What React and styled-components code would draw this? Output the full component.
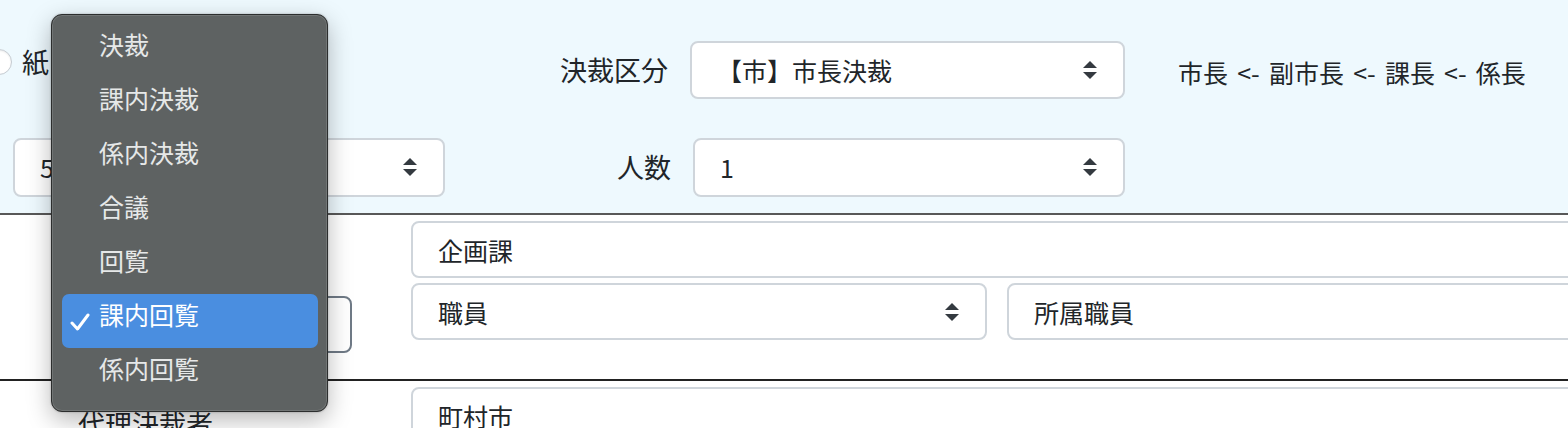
import React from "react";
import styled, { createGlobalStyle } from "styled-components";

const GlobalStyle = createGlobalStyle`
  html, body {
    margin: 0;
    padding: 0;
    background: #ffffff;
    overflow: hidden;
  }
  body {
    font-family: "Noto Sans CJK JP", "Noto Sans", sans-serif;
    color: #212529;
  }
`;

const Page = styled.div`
  position: relative;
  width: 1720px;
  height: 428px;
  overflow: hidden;
`;

const TopPanel = styled.section`
  box-sizing: border-box;
  height: 215px;
  padding-top: 41px;
  background: #eef9fe;
  border-bottom: 2px solid #585858;
  display: flex;
  flex-direction: column;
  gap: 39px;
`;

const TopRow = styled.div`
  display: flex;
  align-items: center;
  height: 58px;
`;

const LeadCell = styled.div`
  flex: none;
  width: 445px;
  box-sizing: border-box;
  padding-left: ${(p) => p.$inset || 0}px;
  display: flex;
  align-items: center;
`;

const Radio = styled.span`
  flex: none;
  width: 24px;
  height: 24px;
  margin-left: -14px;
  margin-top: -16px;
  border-radius: 50%;
  background: #ffffff;
  border: 1px solid #c5cbd1;
  box-shadow: inset 0 1px 2px rgba(0, 0, 0, 0.08);
`;

const RadioText = styled.span`
  margin-left: 10px;
  margin-top: -16px;
  font-size: 27px;
  line-height: 34px;
`;

const FieldLabel = styled.div`
  flex: none;
  width: ${(p) => p.$width}px;
  margin-right: 22px;
  text-align: right;
  font-size: 27px;
  line-height: 34px;
`;

const Route = styled.div`
  margin-left: 53px;
  margin-top: 4px;
  font-size: 25px;
  line-height: 32px;
  word-spacing: 3.6px;
  white-space: nowrap;
`;

const SelectBox = styled.div`
  flex: none;
  box-sizing: border-box;
  width: ${(p) => p.$width}px;
  height: ${(p) => p.$height || 58}px;
  padding: 0 26px 0 25px;
  display: flex;
  align-items: center;
  justify-content: space-between;
  background: #ffffff;
  border: 2px solid ${(p) => (p.$focused ? "#6f7a86" : "#cfd5db")};
  border-radius: 8px;
  font-size: 25px;
  white-space: nowrap;
`;

const TextBox = styled.div`
  box-sizing: border-box;
  flex: ${(p) => (p.$grow ? 1 : "none")};
  height: 57px;
  padding: 0 25px;
  display: flex;
  align-items: center;
  background: #ffffff;
  border: 2px solid #cfd5db;
  border-radius: 8px;
  font-size: 25px;
  white-space: nowrap;
`;

const Section = styled.section`
  display: grid;
  grid-template-columns: 411px 1fr;
  height: ${(p) => p.$height}px;
  box-sizing: border-box;
  border-bottom: ${(p) => (p.$ruled ? "2px solid #222222" : "none")};
`;

const LabelCol = styled.div`
  box-sizing: border-box;
  padding: ${(p) => p.$pad};
  font-size: 27px;
  line-height: 34px;
`;

const FieldCol = styled.div`
  padding-top: 6px;
  display: flex;
  flex-direction: column;
  gap: 5px;
`;

const FieldRow = styled.div`
  display: flex;
  gap: 20px;
`;

const Menu = styled.div`
  position: absolute;
  left: 51px;
  top: 14px;
  width: 277px;
  height: 398px;
  box-sizing: border-box;
  padding: 9px 9px 9px 10px;
  background: #5e6262;
  border: 1px solid #2c2e2e;
  border-radius: 11px;
  box-shadow: inset 0 0 0 1px rgba(255, 255, 255, 0.12),
    0 8px 24px rgba(0, 0, 0, 0.28), 0 0 2px rgba(0, 0, 0, 0.3);
`;

const MenuItem = styled.div`
  position: relative;
  box-sizing: border-box;
  height: 54px;
  padding: 4px 0 0 37px;
  border-radius: 7px;
  background: ${(p) => (p.$active ? "#4a8ee0" : "transparent")};
  color: ${(p) => (p.$active ? "#ffffff" : "#e6e8e8")};
  font-size: 25px;
  line-height: 32px;
`;

const Check = styled.svg`
  position: absolute;
  left: 8px;
  top: 18px;
`;

const Arrows = () => (
  <svg width="14" height="20" viewBox="0 0 14 20">
    <path d="M0 8 L7 1 L14 8 Z" fill="#343a40" />
    <path d="M0 12 L7 19 L14 12 Z" fill="#343a40" />
  </svg>
);

const options = ["決裁", "課内決裁", "係内決裁", "合議", "回覧", "課内回覧", "係内回覧"];

export default function App() {
  const selected = "課内回覧";
  return (
    <>
      <GlobalStyle />
      <Page>
        <TopPanel>
          <TopRow>
            <LeadCell>
              <Radio />
              <RadioText>紙</RadioText>
            </LeadCell>
            <FieldLabel $width={223}>決裁区分</FieldLabel>
            <SelectBox $width={435}>
              <span>【市】市長決裁</span>
              <Arrows />
            </SelectBox>
            <Route>市長 &lt;- 副市長 &lt;- 課長 &lt;- 係長</Route>
          </TopRow>
          <TopRow>
            <LeadCell $inset={13}>
              <SelectBox $width={432} $height={59}>
                <span>5</span>
                <Arrows />
              </SelectBox>
            </LeadCell>
            <FieldLabel $width={226}>人数</FieldLabel>
            <SelectBox $width={432} $height={59}>
              <span>1</span>
              <Arrows />
            </SelectBox>
          </TopRow>
        </TopPanel>

        <Section $height={166} $ruled>
          <LabelCol $pad="81px 0 0 56px">
            <SelectBox $width={296} $height={57} $focused>
              <span>{selected}</span>
              <Arrows />
            </SelectBox>
          </LabelCol>
          <FieldCol>
            <TextBox>企画課</TextBox>
            <FieldRow>
              <SelectBox $width={576} $height={57}>
                <span>職員</span>
                <Arrows />
              </SelectBox>
              <TextBox $grow>所属職員</TextBox>
            </FieldRow>
          </FieldCol>
        </Section>

        <Section $height={60}>
          <LabelCol $pad="26px 0 0 78px">代理決裁者</LabelCol>
          <FieldCol>
            <TextBox>町村市</TextBox>
          </FieldCol>
        </Section>

        <Menu>
          {options.map((o) => (
            <MenuItem key={o} $active={o === selected}>
              {o === selected && (
                <Check width="20" height="20" viewBox="0 0 20 20">
                  <path
                    d="M2 11 L7.5 17 L18 3"
                    fill="none"
                    stroke="#ffffff"
                    strokeWidth="3"
                    strokeLinecap="round"
                    strokeLinejoin="round"
                  />
                </Check>
              )}
              {o}
            </MenuItem>
          ))}
        </Menu>
      </Page>
    </>
  );
}
